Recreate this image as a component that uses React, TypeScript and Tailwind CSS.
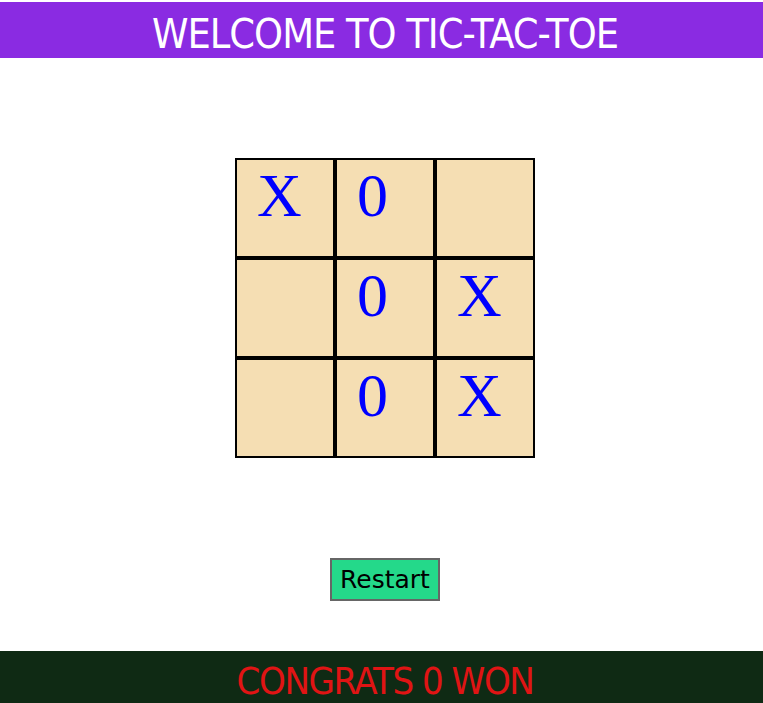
import React, { useState } from 'react'

type Cell = 'X' | '0' | ''

const initialBoard: Cell[] = ['X', '0', '', '', '0', 'X', '', '0', 'X']

const condensed = '"DejaVu Sans Condensed", "DejaVu Sans", sans-serif'

export default function App() {
  const [board, setBoard] = useState<Cell[]>(initialBoard)
  const [winner, setWinner] = useState<string>('0')

  const restart = () => {
    setBoard(Array(9).fill(''))
    setWinner('')
  }

  return (
    <div className="w-full overflow-hidden bg-white min-h-[703px]">
      <div className="w-[770px] pt-[2px] flex flex-col items-center">
        <header className="w-full h-[56px] bg-[#8a2be2] flex items-center justify-center pt-[8px]">
          <h1
            className="text-white text-[41px] leading-none tracking-[-1px]"
            style={{ fontFamily: condensed }}
          >
            WELCOME TO TIC-TAC-TOE
          </h1>
        </header>

        <div className="mt-[100px] grid grid-cols-[repeat(3,100px)]">
          {board.map((cell, i) => (
            <button
              key={i}
              className="w-[100px] h-[100px] border-2 border-black bg-[#f5deb3] text-left pl-[20px] pt-[1px] flex items-start"
            >
              <span
                className="text-[#0000ff] text-[62px] leading-[1.11]"
                style={{ fontFamily: '"Liberation Serif", serif' }}
              >
                {cell}
              </span>
            </button>
          ))}
        </div>

        <button
          onClick={restart}
          className="mt-[100px] w-[110px] h-[43px] bg-[#24d98a] border-2 border-[#666666] flex items-center justify-center"
        >
          <span className="text-black text-[25px] leading-none" style={{ fontFamily: '"DejaVu Sans", sans-serif' }}>
            Restart
          </span>
        </button>

        <footer className="mt-[50px] w-full h-[52px] bg-[#0f2a14] flex items-center justify-center pt-[8px]">
          <p
            className="text-[#e01414] text-[38px] leading-none tracking-[-1.5px]"
            style={{ fontFamily: condensed }}
          >
            {winner ? `CONGRATS ${winner} WON` : ''}
          </p>
        </footer>
      </div>
    </div>
  )
}
